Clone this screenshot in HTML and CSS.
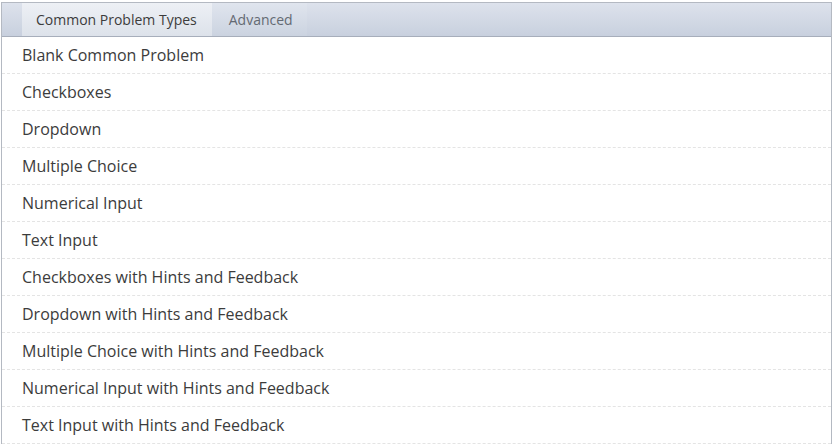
FILE: index.html
```html
<!DOCTYPE html>
<html lang="en">
<head>
  <meta charset="UTF-8">
  <title>Problem Types</title>
  <link rel="stylesheet" href="styles.css">
</head>
<body>
  <div class="panel">
    <!-- Tabs -->
    <div class="tabs">
      <div class="tab active">Common Problem Types</div>
      <div class="tab">Advanced</div>
    </div>

    <!-- Template list -->
    <ul class="templates">
      <li>Blank Common Problem</li>
      <li>Checkboxes</li>
      <li>Dropdown</li>
      <li>Multiple Choice</li>
      <li>Numerical Input</li>
      <li>Text Input</li>
      <li>Checkboxes with Hints and Feedback</li>
      <li>Dropdown with Hints and Feedback</li>
      <li>Multiple Choice with Hints and Feedback</li>
      <li>Numerical Input with Hints and Feedback</li>
      <li>Text Input with Hints and Feedback</li>
    </ul>
  </div>
</body>
</html>
```

FILE: styles.css
```css
body {
  margin: 0;
  font-family: "Open Sans", "Liberation Sans", sans-serif;
  background: #fff;
  color: #3c3c3c;
}

.panel {
  margin: 2px 0 0 1px;
  width: 829px;
  border: 1px solid #b4b9c2;
  border-bottom: none;
  background: #fff;
}

.tabs {
  display: flex;
  height: 33px;
  padding-left: 20px;
  background: linear-gradient(to bottom, #dde2ec, #c8d0de);
  border-bottom: 1px solid #a7aebb;
}

.tab {
  display: flex;
  align-items: center;
  padding: 0 14px 0 17px;
  font-size: 14px;
  color: #646a73;
  background: linear-gradient(to bottom, #e0e5ee, #cbd3e0);
}

.tab.active {
  padding: 0 15px 0 14px;
  color: #3c3c3c;
  background: linear-gradient(to bottom, #edf0f5, #dde2ea);
}

.templates {
  list-style: none;
  margin: 0;
  padding: 0;
}

.templates li {
  height: 36px;
  line-height: 36px;
  padding-left: 20px;
  font-size: 16px;
  border-bottom: 1px dashed #e4e4e4;
}
```
